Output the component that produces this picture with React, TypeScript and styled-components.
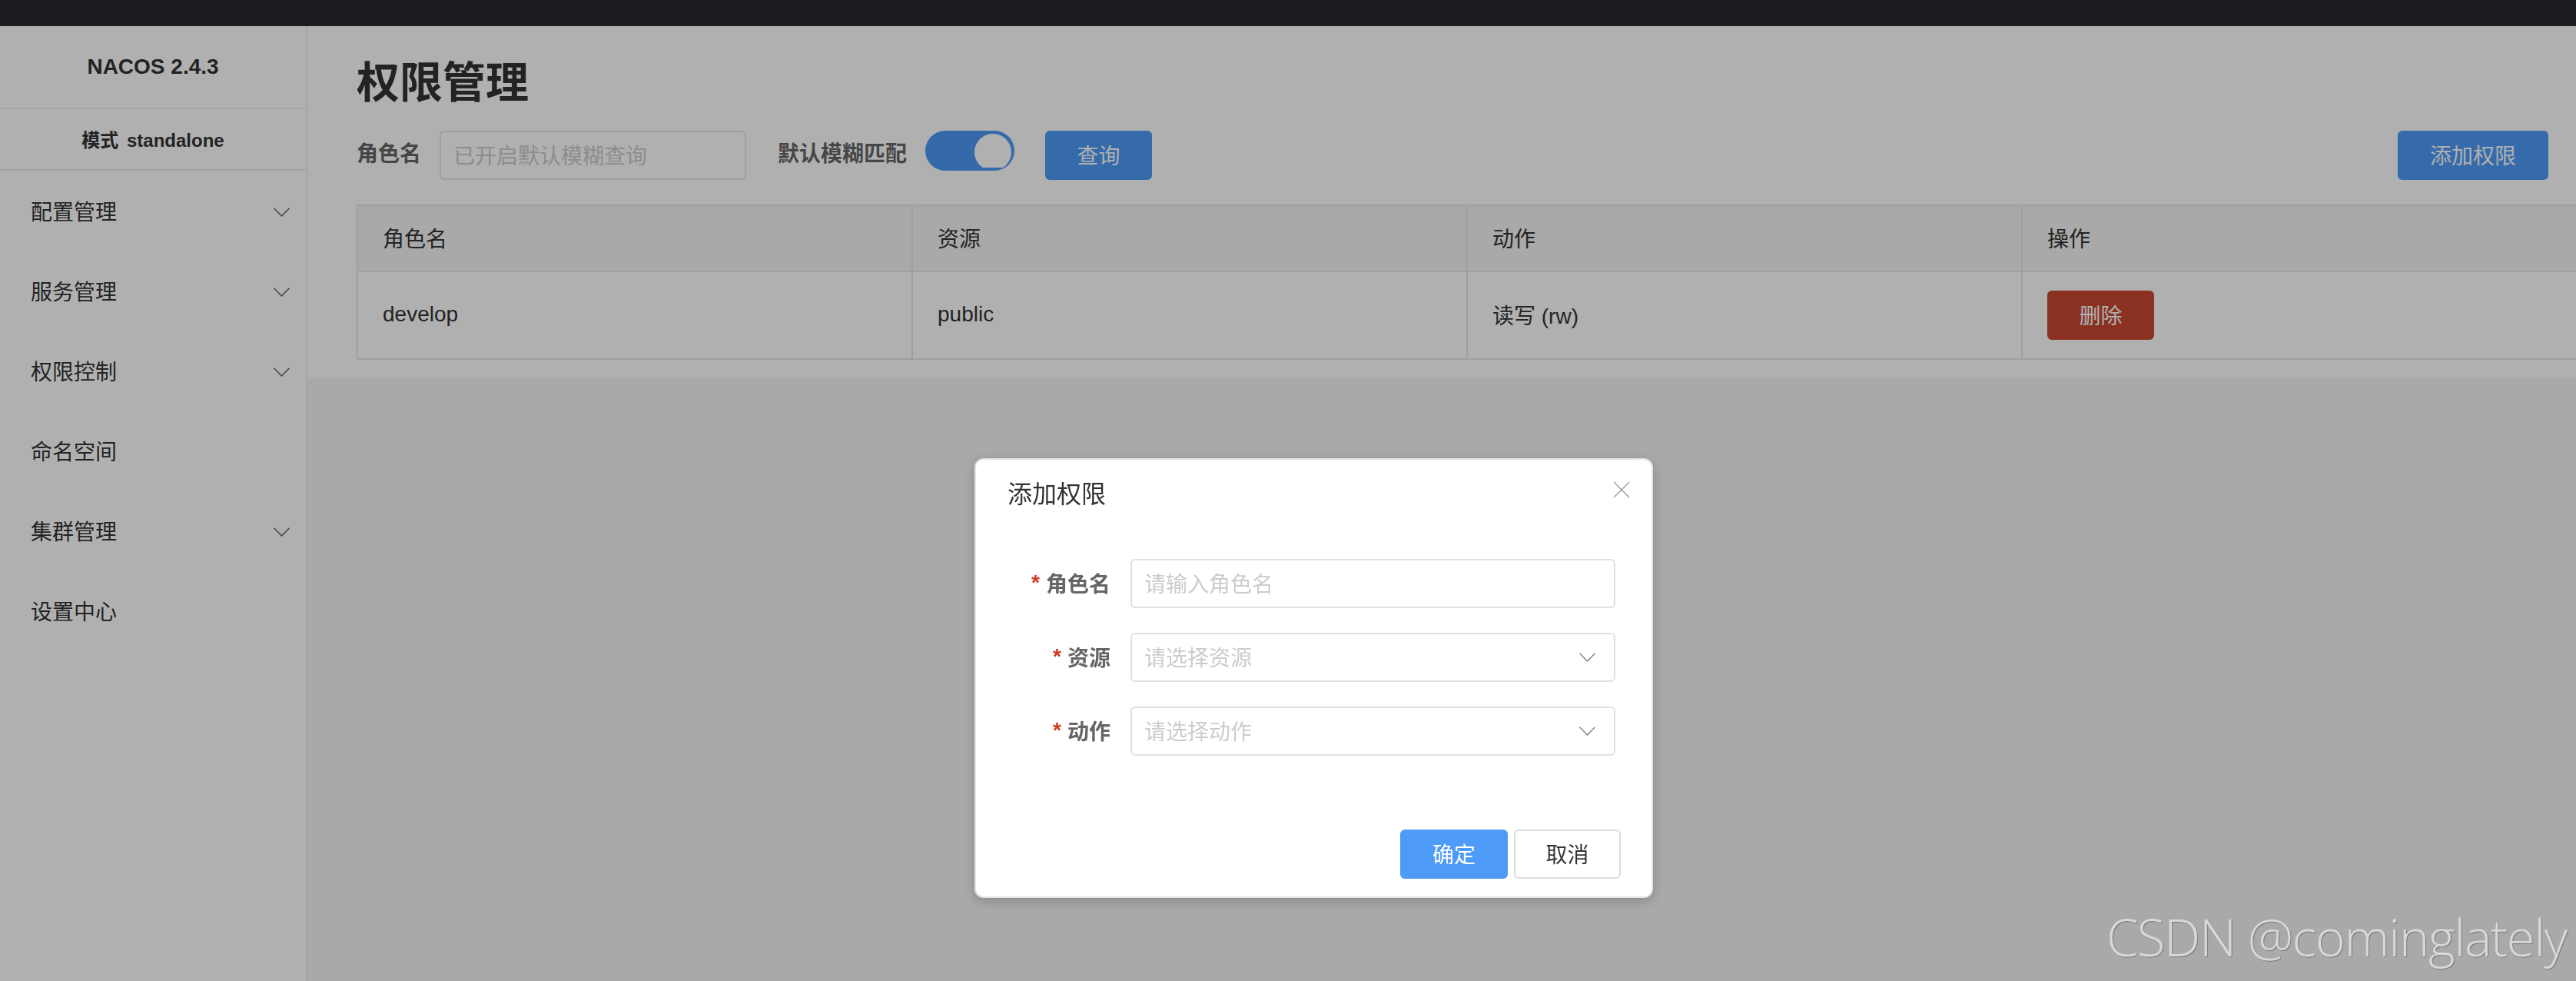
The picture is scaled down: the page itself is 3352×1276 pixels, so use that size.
import { createGlobalStyle, styled } from 'styled-components';

const cjk = '"Liberation Sans", "Noto Sans CJK SC", sans-serif';

const Global = createGlobalStyle`
  html, body {
    margin: 0;
    padding: 0;
    height: 100%;
    overflow: hidden;
  }
  body {
    font-family: ${cjk};
    color: #333;
    background: #f5f5f5;
  }
  * { box-sizing: border-box; }
`;

const Page = styled.div`
  width: 3352px;
  height: 1276px;
  display: flex;
  flex-direction: column;
  overflow: hidden;
`;

const TopBar = styled.div`
  height: 34px;
  flex: none;
  background: #282a30;
`;

const Body = styled.div`
  flex: 1;
  display: flex;
  min-height: 0;
`;

const Sidebar = styled.aside`
  width: 400px;
  flex: none;
  background: #fff;
  border-right: 2px solid #f0f0f0;
`;

const Brand = styled.div`
  height: 108px;
  display: flex;
  align-items: center;
  justify-content: center;
  font-size: 28px;
  font-weight: 700;
  border-bottom: 2px solid #eee;
`;

const Mode = styled.div`
  height: 80px;
  padding-bottom: 2px;
  display: flex;
  align-items: center;
  justify-content: center;
  font-size: 24px;
  font-weight: 700;
  word-spacing: 4px;
  border-bottom: 2px solid #eee;
`;

const NavItem = styled.div`
  height: 104px;
  padding: 0 21px 0 40px;
  display: flex;
  align-items: center;
  justify-content: space-between;
  font-size: 28px;
  color: #333;

  svg {
    margin-top: 3px;
  }
`;

const Main = styled.main`
  flex: 1;
  min-width: 0;
  overflow: hidden;
`;

const Panel = styled.div`
  height: 458px;
  padding: 38px 36px 0 64px;
  background: #fff;
`;

const Title = styled.h1`
  margin: 0 0 26px;
  height: 72px;
  line-height: 72px;
  font-size: 56px;
  font-weight: 700;
  color: #333;
`;

const Filters = styled.div`
  height: 64px;
  display: flex;
  align-items: flex-start;
`;

const FilterLabel = styled.span<{ $gap: number }>`
  height: 64px;
  line-height: 62px;
  margin-right: ${(p) => p.$gap}px;
  font-size: 28px;
  font-weight: 700;
  color: #666;
  white-space: nowrap;
`;

const Input = styled.div`
  width: 399px;
  height: 64px;
  padding: 0 16px 2px;
  margin-right: 41px;
  display: flex;
  align-items: center;
  font-size: 28px;
  color: #ccc;
  border: 2px solid #e6e6e6;
  border-radius: 6px;
  background: #fff;
`;

const Toggle = styled.div`
  width: 116px;
  height: 52px;
  margin-right: 40px;
  padding: 4px;
  display: flex;
  justify-content: flex-end;
  border-radius: 26px;
  background: #4e9af6;
`;

const Knob = styled.div`
  width: 48px;
  height: 44px;
  overflow: hidden;

  &::before {
    content: '';
    display: block;
    width: 48px;
    height: 48px;
    border-radius: 50%;
    background: #fff;
  }
`;

const Button = styled.div<{ $tone: 'primary' | 'danger' | 'plain'; $w: number }>`
  width: ${(p) => p.$w}px;
  height: 64px;
  padding-bottom: 2px;
  flex: none;
  display: flex;
  align-items: center;
  justify-content: center;
  font-size: 28px;
  border-radius: 6px;
  color: ${(p) => (p.$tone === 'plain' ? '#333' : '#fff')};
  background: ${(p) =>
    p.$tone === 'primary' ? '#4e9bf7' : p.$tone === 'danger' ? '#c84731' : '#fff'};
  border: ${(p) => (p.$tone === 'plain' ? '2px solid #ddd' : 'none')};
`;

const Spacer = styled.div`
  flex: 1;
`;

const Table = styled.div`
  margin-top: 32px;
  width: 2890px;
  display: grid;
  grid-template-columns: repeat(4, 722px);
  border-top: 2px solid #e6e6e6;
  border-left: 2px solid #e6e6e6;
`;

const HeadCell = styled.div`
  height: 86px;
  padding: 0 0 2px 32px;
  display: flex;
  align-items: center;
  font-size: 28px;
  color: #333;
  background: #f5f5f5;
  border-right: 2px solid #e6e6e6;
  border-bottom: 2px solid #e6e6e6;
`;

const Cell = styled(HeadCell)`
  height: 114px;
  background: #fff;
`;

const ActionCell = styled(Cell)`
  padding-bottom: 0;
`;

const Mask = styled.div`
  position: fixed;
  inset: 0;
  background: rgba(0, 0, 0, 0.31);
`;

const Dialog = styled.div`
  position: fixed;
  left: 1268px;
  top: 596px;
  width: 883px;
  height: 572px;
  padding: 0 40px 23px 0;
  display: flex;
  flex-direction: column;
  background: #fff;
  border: 2px solid #e4e4e4;
  border-radius: 12px;
  box-shadow: 0 4px 16px rgba(0, 0, 0, 0.2);
`;

const DialogHead = styled.div`
  height: 85px;
  padding: 0 0 2px 41px;
  display: flex;
  align-items: center;
  justify-content: space-between;
  font-size: 32px;
  color: #333;
`;

const Close = styled.svg`
  width: 22px;
  height: 22px;
  margin: -6px -12px 0 0;
`;

const Form = styled.div`
  flex: 1;
  padding-top: 44px;
  display: flex;
  flex-direction: column;
  gap: 32px;
`;

const Field = styled.div`
  display: grid;
  grid-template-columns: 175px 631px;
  column-gap: 26px;
  align-items: center;
`;

const FieldLabel = styled.label`
  padding-bottom: 2px;
  display: flex;
  align-items: center;
  justify-content: flex-end;
  font-size: 28px;
  font-weight: 700;
  color: #666;
`;

const Star = styled.span`
  margin-right: 8px;
  color: #d23c26;
`;

const FieldBox = styled.div`
  height: 64px;
  padding: 0 24px 0 16px;
  display: flex;
  align-items: center;
  justify-content: space-between;
  font-size: 28px;
  color: #ccc;
  border: 2px solid #e0e0e0;
  border-radius: 6px;
`;

const Hint = styled.span`
  padding-bottom: 2px;
`;

const Footer = styled.div`
  display: flex;
  justify-content: flex-end;
  gap: 8px;
`;

const Watermark = styled.div`
  position: fixed;
  left: 2741px;
  top: 1178px;
  font-family: "Open Sans", sans-serif;
  font-weight: 300;
  font-size: 67px;
  letter-spacing: -1.5px;
  line-height: 80px;
  color: #d8d8d8;
  text-shadow: 1px 1px 1px rgba(0, 0, 0, 0.3);
  white-space: nowrap;
`;

const Chevron = styled.svg`
  width: 21px;
  height: 12px;
  flex: none;
`;

function Caret({ color = '#666' }: { color?: string }): JSX.Element {
  return (
    <Chevron viewBox="0 0 21 12" fill="none" stroke={color} strokeWidth="1.6">
      <polyline points="0.5,0.7 10.5,11 20.5,0.7" />
    </Chevron>
  );
}

const nav = [
  { label: '配置管理', sub: true },
  { label: '服务管理', sub: true },
  { label: '权限控制', sub: true },
  { label: '命名空间', sub: false },
  { label: '集群管理', sub: true },
  { label: '设置中心', sub: false },
];

const fields = [
  { label: '角色名', placeholder: '请输入角色名', select: false },
  { label: '资源', placeholder: '请选择资源', select: true },
  { label: '动作', placeholder: '请选择动作', select: true },
];

export default function App(): JSX.Element {
  return (
    <Page>
      <Global />
      <TopBar />
      <Body>
        <Sidebar>
          <Brand>NACOS 2.4.3</Brand>
          <Mode>模式 standalone</Mode>
          {nav.map((item) => (
            <NavItem key={item.label}>
              {item.label}
              {item.sub && <Caret />}
            </NavItem>
          ))}
        </Sidebar>
        <Main>
          <Panel>
            <Title>权限管理</Title>
            <Filters>
              <FilterLabel $gap={24}>角色名</FilterLabel>
              <Input>已开启默认模糊查询</Input>
              <FilterLabel $gap={24}>默认模糊匹配</FilterLabel>
              <Toggle>
                <Knob />
              </Toggle>
              <Button $tone="primary" $w={139}>查询</Button>
              <Spacer />
              <Button $tone="primary" $w={196}>添加权限</Button>
            </Filters>
            <Table>
              <HeadCell>角色名</HeadCell>
              <HeadCell>资源</HeadCell>
              <HeadCell>动作</HeadCell>
              <HeadCell>操作</HeadCell>
              <Cell>develop</Cell>
              <Cell>public</Cell>
              <Cell>读写 (rw)</Cell>
              <ActionCell>
                <Button $tone="danger" $w={139}>删除</Button>
              </ActionCell>
            </Table>
          </Panel>
        </Main>
      </Body>
      <Mask />
      <Dialog>
        <DialogHead>
          添加权限
          <Close viewBox="0 0 22 22" fill="none" stroke="#999" strokeWidth="1.4">
            <path d="M1 1 L21 21 M21 1 L1 21" />
          </Close>
        </DialogHead>
        <Form>
          {fields.map((f) => (
            <Field key={f.label}>
              <FieldLabel>
                <Star>*</Star>
                {f.label}
              </FieldLabel>
              <FieldBox>
                <Hint>{f.placeholder}</Hint>
                {f.select && <Caret color="#888" />}
              </FieldBox>
            </Field>
          ))}
        </Form>
        <Footer>
          <Button $tone="primary" $w={140}>确定</Button>
          <Button $tone="plain" $w={139}>取消</Button>
        </Footer>
      </Dialog>
      <Watermark>CSDN @cominglately</Watermark>
    </Page>
  );
}
